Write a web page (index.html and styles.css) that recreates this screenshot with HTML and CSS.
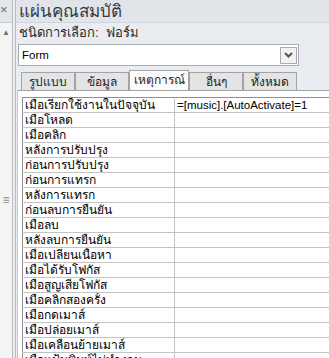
FILE: index.html
```html
<!DOCTYPE html>
<html lang="th">
<head>
  <meta charset="UTF-8">
  <meta name="viewport" content="width=device-width, initial-scale=1.0">
  <title>แผ่นคุณสมบัติ</title>
  <link rel="stylesheet" href="styles.css">
</head>
<body>
  <div class="window">
    <aside class="nav-strip">
      <div class="nav-head">×</div>
      <div class="nav-body">
        <span class="scroll-up">▲</span>
        <span class="grip">≡</span>
      </div>
    </aside>

    <section class="sheet">
      <header class="sheet-title">แผ่นคุณสมบัติ</header>
      <div class="selection">ชนิดการเลือก:&nbsp; ฟอร์ม</div>

      <div class="combo">
        <span class="combo-text">Form</span>
        <span class="combo-btn">
          <svg width="9" height="6" viewBox="0 0 9 6"><path d="M1 1 L4.5 4.5 L8 1" fill="none" stroke="#555" stroke-width="2"/></svg>
        </span>
      </div>

      <ul class="tabs">
        <li>รูปแบบ</li>
        <li>ข้อมูล</li>
        <li class="active">เหตุการณ์</li>
        <li>อื่นๆ</li>
        <li>ทั้งหมด</li>
      </ul>

      <div class="tab-body">
        <table class="props">
          <tr><td>เมื่อเรียกใช้งานในปัจจุบัน</td><td class="value">=[music].[AutoActivate]=1</td></tr>
          <tr><td>เมื่อโหลด</td><td></td></tr>
          <tr><td>เมื่อคลิก</td><td></td></tr>
          <tr><td>หลังการปรับปรุง</td><td></td></tr>
          <tr><td>ก่อนการปรับปรุง</td><td></td></tr>
          <tr><td>ก่อนการแทรก</td><td></td></tr>
          <tr><td>หลังการแทรก</td><td></td></tr>
          <tr><td>ก่อนลบการยืนยัน</td><td></td></tr>
          <tr><td>เมื่อลบ</td><td></td></tr>
          <tr><td>หลังลบการยืนยัน</td><td></td></tr>
          <tr><td>เมื่อเปลี่ยนเนื้อหา</td><td></td></tr>
          <tr><td>เมื่อได้รับโฟกัส</td><td></td></tr>
          <tr><td>เมื่อสูญเสียโฟกัส</td><td></td></tr>
          <tr><td>เมื่อคลิกสองครั้ง</td><td></td></tr>
          <tr><td>เมื่อกดเมาส์</td><td></td></tr>
          <tr><td>เมื่อปล่อยเมาส์</td><td></td></tr>
          <tr><td>เมื่อเคลื่อนย้ายเมาส์</td><td></td></tr>
          <tr><td>เมื่อแป้นพิมพ์ไม่ทำงาน</td><td></td></tr>
        </table>
      </div>
    </section>
  </div>
</body>
</html>
```

FILE: styles.css
```css
body {
  margin: 0;
  padding: 0;
  font-family: "Liberation Sans", Tahoma, "Noto Sans", sans-serif;
  font-size: 12px;
  color: #1e1e1e;
  background-color: #e9ecf0;
  overflow: hidden;
}
.window {
  display: flex;
  width: 329px;
  height: 358px;
  overflow: hidden;
}
.nav-strip {
  width: 12px;
  flex: none;
  display: flex;
  flex-direction: column;
  border-right: 1px solid #b9bcc2;
  background-color: #f4f4f4;
}
.nav-head {
  height: 22px;
  line-height: 20px;
  font-size: 13px;
  color: #6b6b6b;
  background-color: #e3e6ea;
  border-bottom: 1px solid #c9ccd1;
}
.nav-body {
  display: flex;
  flex-direction: column;
  align-items: center;
  color: #6f6f6f;
}
.scroll-up {
  font-size: 8px;
  margin-top: 5px;
}
.grip {
  font-size: 12px;
  margin-top: 156px;
  color: #909090;
}
.sheet {
  flex: 1;
  display: flex;
  flex-direction: column;
  margin-left: 2px;
  border-left: 1px solid #b9bcc2;
  min-width: 0;
}
.sheet-title {
  flex: none;
  height: 22px;
  line-height: 24px;
  padding-left: 3px;
  font-size: 17px;
  color: #333a47;
  background-color: #e1e5ea;
  border-bottom: 1px solid #d2d6dc;
}
.selection {
  flex: none;
  height: 21px;
  line-height: 19px;
  padding-left: 3px;
  font-size: 13px;
  color: #2a2a2a;
}
.combo {
  flex: none;
  display: flex;
  align-items: center;
  justify-content: space-between;
  width: 279px;
  height: 20px;
  margin-left: 2px;
  background-color: #ffffff;
  border: 1px solid #a9acb1;
}
.combo-text {
  padding-left: 3px;
  font-size: 11.5px;
  color: #000000;
}
.combo-btn {
  display: flex;
  align-items: center;
  justify-content: center;
  width: 15px;
  height: 15px;
  margin-right: 1px;
  background-color: #f2f2f2;
  border: 1px solid #a9acb1;
}
.tabs {
  flex: none;
  display: flex;
  align-items: flex-end;
  list-style-type: none;
  margin: 4px 0 0 5px;
  padding: 0;
  height: 20px;
}
.tabs li {
  width: 52px;
  height: 17px;
  line-height: 19px;
  text-align: center;
  font-size: 12px;
  color: #1e1e1e;
  background-color: #e4e4e4;
  border: 1px solid #a3a3a3;
  border-bottom: none;
}
.tabs li.active {
  width: 58px;
  height: 19px;
  line-height: 18px;
  background-color: #fbfbfb;
}
.tab-body {
  flex: 1;
  min-height: 0;
  overflow: hidden;
  margin-left: 1px;
  padding: 6px 0 0 4px;
  background-color: #ffffff;
  border-top: 1px solid #a3a3a3;
  border-left: 1px solid #c7c7c7;
}
.props {
  border-collapse: collapse;
  width: 320px;
  table-layout: fixed;
}
.props td {
  height: 14px;
  padding: 0 0 0 2px;
  line-height: 14px;
  font-size: 12px;
  color: #000000;
  border: 1px solid #c4c4c4;
  white-space: nowrap;
  overflow: hidden;
}
.props td.value {
  font-size: 11.5px;
}
.props td:first-child {
  width: 149px;
  border-left-color: #8f8f8f;
}
.props tr:first-child td {
  border-top-color: #8f8f8f;
}
```
